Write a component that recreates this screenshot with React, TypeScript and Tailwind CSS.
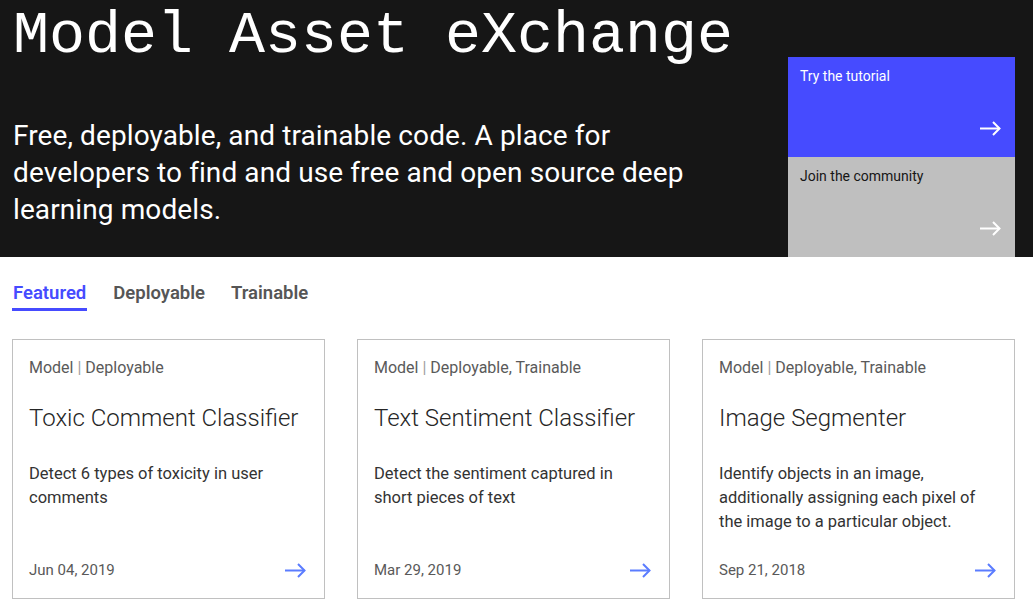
import React from 'react';

interface ModelCard {
  tags: string;
  title: string;
  description: string;
  date: string;
}

const cards: ModelCard[] = [
  {
    tags: 'Deployable',
    title: 'Toxic Comment Classifier',
    description: 'Detect 6 types of toxicity in user comments',
    date: 'Jun 04, 2019',
  },
  {
    tags: 'Deployable, Trainable',
    title: 'Text Sentiment Classifier',
    description: 'Detect the sentiment captured in short pieces of text',
    date: 'Mar 29, 2019',
  },
  {
    tags: 'Deployable, Trainable',
    title: 'Image Segmenter',
    description: 'Identify objects in an image, additionally assigning each pixel of the image to a particular object.',
    date: 'Sep 21, 2018',
  },
];

function Arrow({ className }: { className?: string }) {
  return (
    <svg width="21" height="15" viewBox="0 0 21 15" fill="none" className={className}>
      <path d="M0 7.5H19.5" stroke="currentColor" strokeWidth="2" />
      <path d="M13 1L19.5 7.5L13 14" stroke="currentColor" strokeWidth="2" />
    </svg>
  );
}

export default function App() {
  return (
    <div className="w-[1033px] h-[610px] overflow-hidden bg-white font-['Roboto',sans-serif]">
      {/* hero */}
      <header className="h-[257px] bg-[#161616] flex">
        <div className="flex-1 pl-[13px]">
          <h1 className="pt-[6px] text-[60px] leading-[60px] text-white font-['Liberation_Mono',monospace] font-normal">
            Model Asset eXchange
          </h1>
          <p className="mt-[51px] text-[28px] leading-[37px] text-white tracking-[0.1px]">
            Free, deployable, and trainable code. A place for
            <br />
            developers to find and use free and open source deep
            <br />
            learning models.
          </p>
        </div>
        <div className="w-[227px] mr-[18px] pt-[57px] flex flex-col">
          <a className="h-[100px] bg-[#464bff] text-white flex flex-col justify-between pl-[12px] pr-[14px] pt-[9px] pb-[21px]">
            <span className="text-[14px] leading-5">Try the tutorial</span>
            <Arrow className="self-end text-white" />
          </a>
          <a className="h-[100px] bg-[#bfbfbf] text-[#161616] flex flex-col justify-between pl-[12px] pr-[14px] pt-[9px] pb-[21px]">
            <span className="text-[14px] leading-5">Join the community</span>
            <Arrow className="self-end text-white" />
          </a>
        </div>
      </header>

      {/* tabs */}
      <nav className="pt-6 pl-[12px] flex gap-[26px] text-[18.5px] leading-6 font-semibold">
        <span className="pb-[3px] border-b-[3px] border-[#464bff] text-[#464bff] px-[1px]">Featured</span>
        <span className="pb-[3px] text-[#565656]">Deployable</span>
        <span className="pb-[3px] text-[#565656]">Trainable</span>
      </nav>

      {/* cards */}
      <main className="mt-[28px] pl-[12px] pr-[18px] grid grid-cols-3 gap-8">
        {cards.map((card) => (
          <div key={card.title} className="h-[260px] border border-[#c0c0c0] px-4 pt-4 pb-4 flex flex-col">
            <div className="text-[16px] leading-6 text-[#5a5a5a]">
              Model <span className="text-[#a0a0a0]">|</span> {card.tags}
            </div>
            <h2 className="mt-[22px] text-[24px] leading-8 font-light text-[#262626]">{card.title}</h2>
            <p className="mt-[28px] text-[16.5px] leading-6 text-[#333333] pr-[4px]">{card.description}</p>
            <div className="mt-auto flex items-center justify-between pr-[2px]">
              <span className="text-[15px] leading-6 text-[#595959]">{card.date}</span>
              <Arrow className="text-[#5b7cff]" />
            </div>
          </div>
        ))}
      </main>
    </div>
  );
}
